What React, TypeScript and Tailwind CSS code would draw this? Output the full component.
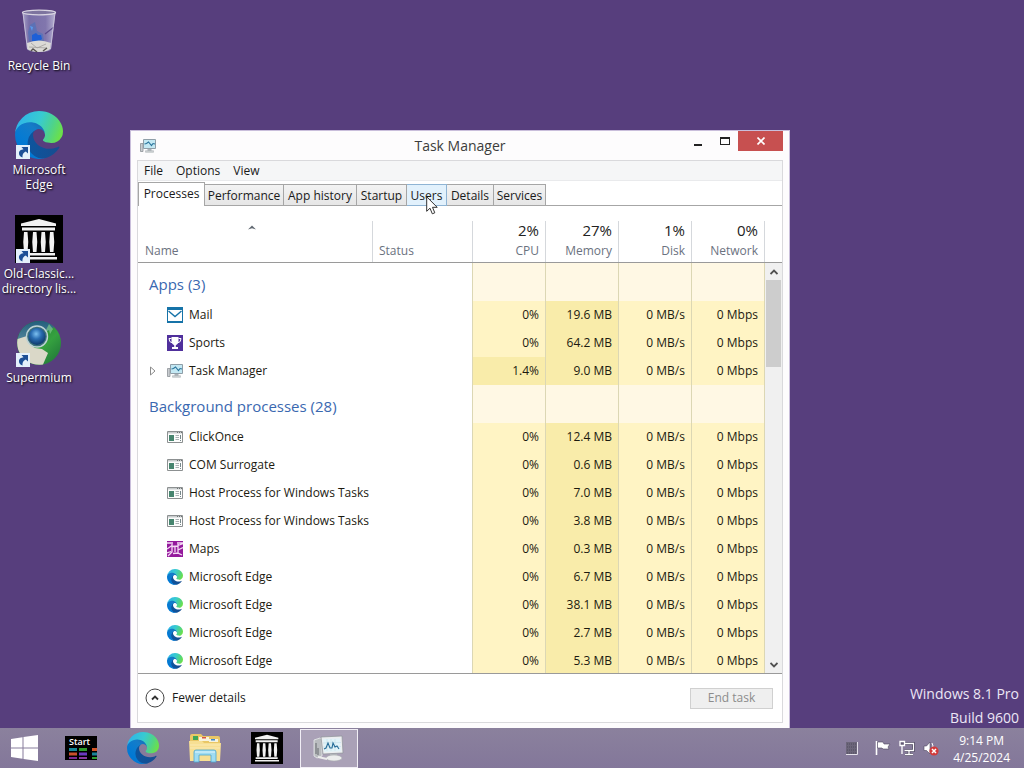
import { useId, useState } from "react";
import type { ReactNode } from "react";

type IconProps = { className?: string };

function EdgeIcon({ className }: IconProps) {
  const id = useId();
  return (
    <svg viewBox="0 0 256 256" className={className} aria-hidden="true">
      <defs>
        <linearGradient id={id + "a"} x1="63" y1="178" x2="241" y2="178" gradientUnits="userSpaceOnUse">
          <stop offset="0" stopColor="#0c559f" />
          <stop offset="1" stopColor="#164d90" />
        </linearGradient>
        <linearGradient id={id + "b"} x1="157" y1="90" x2="46" y2="211" gradientUnits="userSpaceOnUse">
          <stop offset="0" stopColor="#1670ba" />
          <stop offset="0.25" stopColor="#157cc8" />
          <stop offset="0.67" stopColor="#087bd1" />
          <stop offset="1" stopColor="#0078d4" />
        </linearGradient>
        <linearGradient id={id + "c"} x1="20" y1="60" x2="240" y2="150" gradientUnits="userSpaceOnUse">
          <stop offset="0" stopColor="#2fb6e8" />
          <stop offset="0.45" stopColor="#38cbd0" />
          <stop offset="0.75" stopColor="#4ed38b" />
          <stop offset="1" stopColor="#6be04a" />
        </linearGradient>
      </defs>
      <g transform="translate(-4.63 -4.92)">
        <path
          fill={`url(#${id}a)`}
          d="M235.68 195.46a93.73 93.73 0 0 1-10.54 4.71 101.87 101.87 0 0 1-35.9 6.46c-47.32 0-88.54-32.55-88.54-74.32A31.48 31.48 0 0 1 117.13 105c-42.8 1.8-53.8 46.4-53.8 72.53 0 73.88 68.09 81.37 82.76 81.37 7.91 0 19.84-2.3 27-4.56l1.31-.44A128.34 128.34 0 0 0 241 201.1a4 4 0 0 0-5.32-5.64Z"
        />
        <path
          fill={`url(#${id}b)`}
          d="M110.34 246.34A79.2 79.2 0 0 1 87.6 225a80.72 80.72 0 0 1 29.53-120c3.12-1.47 8.45-4.13 15.54-4a32.35 32.35 0 0 1 25.69 13 31.88 31.88 0 0 1 6.36 18.66c0-.21 24.46-79.6-80-79.6-43.9 0-80 41.66-80 78.21a130.15 130.15 0 0 0 12.11 56 128 128 0 0 0 156.38 67.11 75.55 75.55 0 0 1-62.78-8Z"
        />
        <path
          fill={`url(#${id}c)`}
          d="M156.94 153.78c-.81 1.05-3.3 2.5-3.3 5.66 0 2.61 1.7 5.12 4.72 7.23 14.38 10 41.49 8.68 41.56 8.68a59.56 59.56 0 0 0 30.27-8.35A61.38 61.38 0 0 0 260.62 114c.26-22.41-8-37.31-11.34-43.91C228.08 28.76 182.35 5 132.62 5a128 128 0 0 0-128 126.2c.48-36.54 36.8-66.05 80-66.05 3.5 0 23.46.34 42 10.07 16.34 8.58 24.9 18.94 30.85 29.21 6.18 10.67 7.28 24.15 7.28 29.52s-2.74 13.33-7.81 19.83Z"
        />
      </g>
    </svg>
  );
}

function RecycleBinIcon({ className }: IconProps) {
  const id = useId();
  return (
    <svg viewBox="0 0 36 44" className={className} aria-hidden="true">
      <defs>
        <linearGradient id={id + "g"} x1="0" x2="1" y1="0" y2="0">
          <stop offset="0" stopColor="#b9b5d6" stopOpacity="0.85" />
          <stop offset="0.2" stopColor="#817ab2" stopOpacity="0.8" />
          <stop offset="0.7" stopColor="#8f89bd" stopOpacity="0.75" />
          <stop offset="1" stopColor="#c4c0dc" stopOpacity="0.9" />
        </linearGradient>
      </defs>
      <path d="M1.500 3 6 40q1 3 12 3t12-3l4.500-37Z" fill={`url(#${id}g)`} />
      <path d="m9 16 5-3 2 9 6 3 1 7-8 2-7-2-1-9Z" fill="#4a72bd" opacity="0.6" />
      <path d="m11 26 4-2 2 2 3 0 1 4-5 4-5-2Z" fill="#1d5fd6" />
      <path d="m9 17 3 1-1 4Z" fill="#5b9aec" />
      <path d="M6 34q12-5 24 0l-1 6q-3 3-11 3T6 40Z" fill="#dcdad6" />
      <path d="m10 34 6 5 9-4M8 38l18 1" stroke="#a3a19e" fill="none" strokeWidth="0.800" />
      <path d="m10 42 2-2 4 3M22 42l4-3" stroke="#56524f" strokeWidth="1.400" fill="none" />
      <path d="M24 25l9-7" stroke="#5b4b8c" strokeWidth="1.200" />
      <path d="M2 4 6.500 40M34 4l-4.500 36" stroke="#c9c4db" strokeWidth="0.900" />
      <ellipse cx="18" cy="3.500" rx="16.500" ry="2.300" fill="#7d749f" stroke="#d9d5e2" strokeWidth="1.300" />
    </svg>
  );
}

function TempleIcon({ className }: IconProps) {
  return (
    <svg viewBox="0 0 48 48" className={className} aria-hidden="true">
      <path fill="#000" d="M0 0h48v48H0z" />
      <g fill="#f2f2f2">
        <path d="m24 4 17 4.500V11H6V8.500ZM7 12.500h33v3H7ZM7 38h33v2.600H7ZM6 42h36v2.400H6Z" />
        <path d="M9 17h3.500q1.500 10 0 20H9q-1.500-10 0-20ZM18 17h3.500q1.500 10 0 20H18q-1.500-10 0-20ZM26.500 17H30q1.500 10 0 20h-3.500q-1.500-10 0-20ZM35 17h3.500q1.500 10 0 20H35q-1.500-10 0-20Z" />
      </g>
    </svg>
  );
}

function SupermiumIcon({ className }: IconProps) {
  const id = useId();
  return (
    <svg viewBox="0 0 48 48" className={className} aria-hidden="true">
      <defs>
        <radialGradient id={id + "b"} cx="0.45" cy="0.35" r="0.6">
          <stop offset="0" stopColor="#7cc0f0" />
          <stop offset="0.5" stopColor="#2a6db2" />
          <stop offset="1" stopColor="#123f74" />
        </radialGradient>
        <linearGradient id={id + "g"} x1="0" x2="1" y1="0" y2="1">
          <stop offset="0" stopColor="#1c6b33" />
          <stop offset="0.6" stopColor="#35a13f" />
          <stop offset="1" stopColor="#1c6e38" />
        </linearGradient>
        <linearGradient id={id + "t"} x1="0" x2="0" y1="0" y2="1">
          <stop offset="0" stopColor="#235f7c" />
          <stop offset="1" stopColor="#4f8299" />
        </linearGradient>
      </defs>
      <circle cx="24" cy="24" r="22" fill={`url(#${id}g)`} />
      <path d="M2.500 20A22 22 0 0 1 39 8l-6 4-8-3-9 4-5 6Z" fill={`url(#${id}t)`} />
      <path d="M2.500 20l9.500-3q1 9 8 12l7 1 6 4-5 11.500A22 22 0 0 1 2.500 20Z" fill="#dad8c8" />
      <path d="M34 5l-4 8 4-2 1 4 3-5Z" fill="#7dc98a" opacity="0.7" />
      <circle cx="22" cy="17.500" r="10.500" fill="#3b6f7a" stroke="#bfd3d6" strokeWidth="1.400" />
      <circle cx="22" cy="17.500" r="8.500" fill={`url(#${id}b)`} />
    </svg>
  );
}

function ShortcutBadge() {
  return (
    <svg viewBox="0 0 14 14" className="absolute bottom-0 left-px size-3.5" aria-hidden="true">
      <path d="M0 0h14v14H0z" fill="#e4f0fb" />
      <path d="M5.500 2H12v6.500L9.800 6.500Q6 8 6.500 12.500 2.500 11 3 7.500 3.500 4.800 7.500 4.300Z" fill="#1d4f96" />
    </svg>
  );
}

function MonitorIcon({ className }: IconProps) {
  return (
    <svg viewBox="0 0 16 16" className={className} aria-hidden="true">
      <path d="M.5 5.500h2.500v8H.5z" fill="#c8ccd0" stroke="#8d9297" strokeWidth="0.8" />
      <path d="M3.500 1.500h12v9h-12z" fill="#c3e8f3" stroke="#8f9ea8" />
      <path d="m4.500 6 2-.5L8.500 4l3 3.500 1.500-2 2 .5" fill="none" stroke="#28749c" strokeWidth="1.100" />
      <path d="M7.500 11h4v2h-4z" fill="#aab2b8" />
      <path d="M5.500 12.700h8v1.600h-8z" fill="#d0d4d7" stroke="#a5aaae" strokeWidth="0.500" />
    </svg>
  );
}

function LargeMonitorIcon({ className }: IconProps) {
  return (
    <svg viewBox="0 0 32 28" className={className} aria-hidden="true">
      <path d="m1 6 6-2 2 1v17l-5 2-3-2Z" fill="#b9bcbf" stroke="#e9ebec" strokeWidth="0.8" />
      <path d="M3 9v11M5 14v7" stroke="#65696d" />
      <path d="m8 3 21-1 1 17-20 1Z" fill="#eceef0" stroke="#8c9297" strokeWidth="0.700" />
      <path d="m10 5 17-.8 1 13-17 .8Z" fill="#e2f3f8" />
      <path d="M14 5v12M18 5v12M22 5v12M10 9l18-.5M10 13l18-.5" stroke="#bcdbe7" strokeWidth="0.500" />
      <path d="m11 15 2-1 2-5 2 5 2 0 1-5 2 4 2-1 2 3" fill="none" stroke="#266c98" strokeWidth="1.100" />
      <path d="M17 20h7v3h-7z" fill="#b5b9bd" />
      <ellipse cx="21" cy="24" rx="8" ry="3" fill="#eceded" stroke="#a7abae" strokeWidth="0.600" />
      <path d="m5 23 9 2" stroke="#ececec" strokeWidth="2" />
    </svg>
  );
}

function MailIcon({ className }: IconProps) {
  return (
    <svg viewBox="0 0 16 16" className={className} aria-hidden="true">
      <path d="M0 0h16v16H0z" fill="#1673a8" />
      <path d="M1 3h14v11H1z" fill="#fff" />
      <path d="m1.500 4 6.500 5.500L14.500 4" fill="none" stroke="#1673a8" strokeWidth="1.400" />
    </svg>
  );
}

function SportsIcon({ className }: IconProps) {
  return (
    <svg viewBox="0 0 16 16" className={className} aria-hidden="true">
      <path d="M0 0h16v16H0z" fill="#50309c" />
      <path d="M4.500 2h7v5q-1 3-2.700 3.300V12H11v2H5v-2h2.200v-1.700Q5.500 10 4.500 7Z" fill="#fff" />
      <path d="M4.500 3.500H2q0 4 3.500 4.500M11.500 3.500H14q0 4-3.500 4.500" fill="none" stroke="#fff" />
    </svg>
  );
}

function ProgramIcon({ className }: IconProps) {
  return (
    <svg viewBox="0 0 16 16" className={className} aria-hidden="true">
      <path d="M.5 2.500h15v11H.5z" fill="#fdfdfd" stroke="#8c9091" />
      <path d="M1 3h14v1.500H1z" fill="#c9cdce" />
      <path d="M10 3.500h1M12 3.500h1M14 3.500h1" stroke="#6d7273" />
      <path d="M2 6h5v6H2z" fill="#47856f" />
      <path d="M8.500 6.500H12M8.500 8.500H12M8.500 10.500H12" stroke="#a9b2b4" />
      <path d="M13.500 6v4M13.500 11v1" stroke="#77888b" />
    </svg>
  );
}

function MapsIcon({ className }: IconProps) {
  return (
    <svg viewBox="0 0 16 16" className={className} aria-hidden="true">
      <path d="M0 0h16v16H0z" fill="#941a9c" />
      <path
        d="M0 2h6M10 2h6M0 8 5 4.500M5 3v8l-4 4M11 3v9l4 2M8 5v6M5 5.500l6-.5M11 4.500l5-2M0 12l4-1.500M6 12.500l5-.5M11 9l5-2.500"
        fill="none"
        stroke="#f4d9f5"
        strokeWidth="1.300"
      />
    </svg>
  );
}

function FolderIcon({ className }: IconProps) {
  return (
    <svg viewBox="0 0 32 30" className={className} aria-hidden="true">
      <path d="M1 3q0-2 2-2h9l2 2h15q2 0 2 2v22H1Z" fill="#e9c766" />
      <path d="M4 3h5v4H4z" fill="#3fa657" />
      <path d="M10 4h10v4H10z" fill="#f8f3dc" />
      <path d="M13 4h4v1.500h-4z" fill="#d95442" />
      <path d="M20 6h9v3h-9z" fill="#f8f3dc" />
      <path d="M22 6h4v1.500h-4z" fill="#3b86d0" />
      <path d="M0 8h13l2 2h17l-1 18H1Z" fill="#f7df93" />
      <path d="M1 12h30M1 15h30" stroke="#fbeab4" />
      <path d="M5 29V19q0-2 2-2h18q2 0 2 2v10h-5v-7H10v7Z" fill="#9fdcf2" stroke="#4ba6cf" strokeWidth="0.800" />
      <path d="M6 19h20" stroke="#e1f6fd" />
    </svg>
  );
}

function WindowsIcon({ className }: IconProps) {
  return (
    <svg viewBox="0 0 28 26" className={className} aria-hidden="true">
      <path
        d="M0 4l11.500-1.700v10.200H0ZM12.500 2.100 27 0v12.500H12.500ZM0 13.500h11.500v10.200L0 22ZM12.500 13.500H27V26l-14.500-2.100Z"
        fill="#fff"
      />
    </svg>
  );
}

function StartTile() {
  return (
    <span className="flex h-6 w-8 flex-col bg-black pl-1 text-left">
      <span className="text-[9px] leading-[11px] font-semibold text-white">Start</span>
      <svg viewBox="0 0 28 12" className="h-3 w-7" aria-hidden="true">
        <path d="M0 1h8v3H0z" fill="#16889a" />
        <path d="M10 1h8v3h-8z" fill="#2f9e2c" />
        <path d="M23 1h5v3h-5z" fill="#d35426" />
        <path d="M0 5.500h8v3H0z" fill="#c9512b" />
        <path d="M10 5.500h8v3h-8z" fill="#6a3ac0" />
        <path d="M23 5.500h5v3h-5z" fill="#1b8296" />
        <path d="M0 10h8v2H0z" fill="#7b2a92" />
        <path d="M10 10h8v2h-8z" fill="#8a3aa0" />
        <path d="M23 10h5v2h-5z" fill="#2f9e2c" />
      </svg>
    </span>
  );
}

type Row = {
  name: string;
  icon: (p: IconProps) => ReactNode;
  cpu: string;
  memory: string;
  expandable?: boolean;
};

const apps: Row[] = [
  { name: "Mail", icon: MailIcon, cpu: "0%", memory: "19.6 MB" },
  { name: "Sports", icon: SportsIcon, cpu: "0%", memory: "64.2 MB" },
  { name: "Task Manager", icon: MonitorIcon, cpu: "1.4%", memory: "9.0 MB", expandable: true },
];

const background: Row[] = [
  { name: "ClickOnce", icon: ProgramIcon, cpu: "0%", memory: "12.4 MB" },
  { name: "COM Surrogate", icon: ProgramIcon, cpu: "0%", memory: "0.6 MB" },
  { name: "Host Process for Windows Tasks", icon: ProgramIcon, cpu: "0%", memory: "7.0 MB" },
  { name: "Host Process for Windows Tasks", icon: ProgramIcon, cpu: "0%", memory: "3.8 MB" },
  { name: "Maps", icon: MapsIcon, cpu: "0%", memory: "0.3 MB" },
  { name: "Microsoft Edge", icon: EdgeIcon, cpu: "0%", memory: "6.7 MB" },
  { name: "Microsoft Edge", icon: EdgeIcon, cpu: "0%", memory: "38.1 MB" },
  { name: "Microsoft Edge", icon: EdgeIcon, cpu: "0%", memory: "2.7 MB" },
  { name: "Microsoft Edge", icon: EdgeIcon, cpu: "0%", memory: "5.3 MB" },
];

const plainTab = "border-[#a6a6a6] bg-linear-to-b from-[#f3f3f3] to-[#e6e6e6]";

const tabs = [
  { label: "Performance", style: `w-[79px] ${plainTab}` },
  { label: "App history", style: `w-[73px] ${plainTab}` },
  { label: "Startup", style: `w-[50px] ${plainTab}` },
  { label: "Users", style: "w-10 border-[#8fb4d4] bg-[#e2f1fc]" },
  { label: "Details", style: `w-[47px] ${plainTab}` },
  { label: "Services", style: `w-[52px] ${plainTab}` },
];

const usage = [
  { label: "CPU", value: "2%" },
  { label: "Memory", value: "27%" },
  { label: "Disk", value: "1%" },
  { label: "Network", value: "0%" },
];

const cell = "border-r border-[#dcd7b4] pr-1.5 text-right";

function GroupRow({ title }: { title: string }) {
  return (
    <tr className="h-[38px]">
      <th colSpan={2} scope="rowgroup" className="border-r border-[#dcd7b4] pt-1 pl-[11px] text-left text-[15px] font-normal text-[#3a68b0]">
        {title}
      </th>
      {usage.map((u) => (
        <td key={u.label} className="border-r border-[#dcd7b4] bg-[#fff8e4]" />
      ))}
    </tr>
  );
}

function ProcessRow({ row }: { row: Row }) {
  const Icon = row.icon;
  const busy = row.cpu !== "0%";
  return (
    <tr className="h-7">
      <td colSpan={2} className="border-r border-[#dcd7b4]">
        <div className="flex items-center pl-[11px]">
          <span className="flex w-[18px]">
            {row.expandable && (
              <button type="button" aria-label="Expand Task Manager">
                <svg viewBox="0 0 8 10" className="h-2.5 w-2" aria-hidden="true">
                  <path d="M1.500 1 6 5l-4.500 4Z" fill="#fff" stroke="#8b8b8b" />
                </svg>
              </button>
            )}
          </span>
          <Icon className="mr-1.5 size-4" />
          {row.name}
        </div>
      </td>
      <td className={busy ? `${cell} bg-[#f9ecaa]` : `${cell} bg-[#fff4c4]`}>{row.cpu}</td>
      <td className={`${cell} bg-[#f9ecaa]`}>{row.memory}</td>
      <td className={`${cell} bg-[#fff4c4]`}>0 MB/s</td>
      <td className={`${cell} bg-[#fff4c4]`}>0 Mbps</td>
    </tr>
  );
}

function TaskManager() {
  const [active, setActive] = useState("Processes");
  return (
    <section
      aria-label="Task Manager"
      className="absolute bottom-0 left-[130px] flex h-[598px] w-[660px] flex-col border border-b-0 border-[#c9bedb] bg-[#fdfcfd] px-1.5 pb-[5px]"
    >
      <header className="flex h-[29px] shrink-0 items-start">
        <div className="flex w-[135px] pt-[7px] pl-[3px]">
          <MonitorIcon className="size-4" />
        </div>
        <h1 className="flex-1 text-center text-sm leading-[29px] text-[#3c3c3c]">Task Manager</h1>
        <div className="flex w-[135px] justify-end">
          <button type="button" aria-label="Minimize" className="flex h-5 w-[27px] items-end justify-center pb-[5px]">
            <span className="h-0.5 w-2 bg-[#222]" />
          </button>
          <button type="button" aria-label="Maximize" className="flex h-5 w-[27px] items-center justify-center">
            <span className="h-2 w-2.5 border border-t-2 border-[#222]" />
          </button>
          <button type="button" aria-label="Close" className="flex h-5 w-[45px] items-center justify-center bg-[#c75050]">
            <svg viewBox="0 0 8 8" className="size-2" aria-hidden="true">
              <path d="m.5.5 7 7m0-7-7 7" stroke="#fff" strokeWidth="1.600" />
            </svg>
          </button>
        </div>
      </header>

      <div className="flex min-h-0 flex-1 flex-col border border-[#d9d9dc] bg-white">
        <nav aria-label="Menu" className="flex h-5 shrink-0 items-center gap-[13px] border-b border-[#e9eaec] bg-[#f5f6f7] pl-1.5 text-[12px] text-[#1a1a1a]">
          <button type="button">File</button>
          <button type="button">Options</button>
          <button type="button">View</button>
        </nav>

        <div role="tablist" className="flex h-[25px] shrink-0 items-end text-[12px] leading-4 text-[#1a1a1a]">
          <button
            type="button"
            role="tab"
            aria-selected={active === "Processes"}
            onClick={() => setActive("Processes")}
            className="h-6 w-[67px] border border-b-0 border-[#a6a6a6] bg-white pb-0.5"
          >
            Processes
          </button>
          {tabs.map((t) => (
            <button
              key={t.label}
              type="button"
              role="tab"
              aria-selected={active === t.label}
              onClick={() => setActive(t.label)}
              className={`h-[22px] shrink-0 border border-l-0 pt-0.5 ${t.style}`}
            >
              {t.label}
            </button>
          ))}
          <span className="h-px flex-1 bg-[#a6a6a6]" />
        </div>

        <div className="flex min-h-0 flex-1 overflow-hidden">
          <table className="h-px flex-1 table-fixed border-separate border-spacing-0 text-[12px] text-[#1c1a10]">
            <colgroup>
              <col />
              <col className="w-[100px]" />
              <col className="w-[73px]" />
              <col className="w-[73px]" />
              <col className="w-[73px]" />
              <col className="w-[73px]" />
            </colgroup>
            <thead className="text-[#6b7280]">
              <tr className="h-[57px]">
                <th scope="col" className="border-b border-[#9a9a9a] p-0 pt-[15px] font-normal">
                  <div className="flex h-[41px] flex-col border-r border-[#d5d8dc] pl-[7px] text-left">
                    <svg viewBox="0 0 8 5" className="mt-1 mr-3.5 h-[5px] w-2 self-center" aria-hidden="true">
                      <path d="M0 4.500 4 .5l4 4-4-1.300Z" fill="#5f6770" />
                    </svg>
                    <span className="mt-auto pb-[3px] leading-4">Name</span>
                  </div>
                </th>
                <th scope="col" className="border-b border-[#9a9a9a] p-0 pt-[15px] font-normal">
                  <div className="flex h-[41px] flex-col border-r border-[#d5d8dc] pl-1.5 text-left">
                    <span className="mt-auto pb-[3px] leading-4">Status</span>
                  </div>
                </th>
                {usage.map((u) => (
                  <th key={u.label} scope="col" className="border-b border-[#9a9a9a] p-0 pt-[15px] font-normal">
                    <div className="flex h-[41px] flex-col justify-end border-r border-[#d5d8dc] pr-1.5 pb-[3px] text-right">
                      <span className="mb-[3px] text-[15px] leading-5 text-[#222]">{u.value}</span>
                      <span className="leading-4">{u.label}</span>
                    </div>
                  </th>
                ))}
              </tr>
            </thead>
            <tbody>
              <GroupRow title="Apps (3)" />
              {apps.map((r) => (
                <ProcessRow key={r.name} row={r} />
              ))}
            </tbody>
            <tbody>
              <GroupRow title="Background processes (28)" />
              {background.map((r, i) => (
                <ProcessRow key={i} row={r} />
              ))}
            </tbody>
          </table>
          <div className="flex w-[17px] flex-col">
            <div className="h-[57px] shrink-0 border-b border-[#9a9a9a]" />
            <div className="flex flex-1 flex-col bg-[#f0f0f0] pr-px pl-px">
              <button type="button" aria-label="Scroll up" className="flex h-[17px] items-center justify-center">
                <svg viewBox="0 0 8 6" className="h-1.5 w-2" aria-hidden="true">
                  <path d="m.5 5 3.500-3.500L7.500 5" fill="none" stroke="#505050" strokeWidth="1.800" />
                </svg>
              </button>
              <div className="h-[87px] bg-[#cdcdcd]" />
              <button type="button" aria-label="Scroll down" className="mt-auto flex h-[17px] items-center justify-center">
                <svg viewBox="0 0 8 6" className="h-1.5 w-2" aria-hidden="true">
                  <path d="m.5 1 3.500 3.500L7.500 1" fill="none" stroke="#505050" strokeWidth="1.800" />
                </svg>
              </button>
            </div>
          </div>
        </div>

        <footer className="flex h-[49px] shrink-0 items-center justify-between border-t border-[#9a9a9a] pr-[9px] pl-[7px] text-[12px]">
          <button type="button" className="flex items-center gap-[7px] text-[#1a1a1a]">
            <svg viewBox="0 0 20 20" className="size-5" aria-hidden="true">
              <circle cx="10" cy="10" r="9" fill="#fff" stroke="#444" />
              <path d="m7 11.500 3-3 3 3" fill="none" stroke="#333" strokeWidth="1.800" />
            </svg>
            Fewer details
          </button>
          <button type="button" disabled className="h-[21px] w-[83px] border border-[#d0d0d0] bg-[#efefef] leading-4 text-[#8c8c8c]">
            End task
          </button>
        </footer>
      </div>

      <svg viewBox="0 0 13 20" className="pointer-events-none absolute top-[65px] left-[295px] h-5 w-[13px]" aria-hidden="true">
        <path d="M.7.800v14.500l3.300-3.100 2.300 5.600 2.500-1-2.300-5.500h4.700Z" fill="#fff" stroke="#333" />
      </svg>
    </section>
  );
}

function DesktopItem({ label, shortcut, children }: { label: ReactNode; shortcut?: boolean; children: ReactNode }) {
  return (
    <button
      type="button"
      className="flex h-[104px] w-full flex-col items-center gap-[3px] text-[12px] leading-[15px] text-white [text-shadow:1px_1px_2px_#000]"
    >
      <span className="relative flex size-12 items-center justify-center">
        {children}
        {shortcut && <ShortcutBadge />}
      </span>
      <span className="whitespace-nowrap">{label}</span>
    </button>
  );
}

function Taskbar() {
  return (
    <footer className="flex h-10 shrink-0 items-center justify-between bg-linear-to-b from-[#8b819d] to-[#83779a] text-white">
      <nav aria-label="Taskbar" className="flex h-full items-center">
        <button type="button" aria-label="Start" className="flex w-[50px] justify-center">
          <WindowsIcon className="h-[26px] w-7" />
        </button>
        <button type="button" aria-label="Start screen" className="flex w-[62px] justify-center">
          <StartTile />
        </button>
        <button type="button" aria-label="Microsoft Edge" className="flex w-[62px] justify-center">
          <EdgeIcon className="size-8" />
        </button>
        <button type="button" aria-label="File Explorer" className="flex w-[62px] justify-center">
          <FolderIcon className="h-[30px] w-8" />
        </button>
        <button type="button" aria-label="Old-Classic directory listing" className="flex w-[62px] justify-center">
          <TempleIcon className="size-8" />
        </button>
        <button
          type="button"
          aria-label="Task Manager"
          className="ml-0.5 flex h-[39px] w-[58px] items-center justify-center border border-[#f1eef5] bg-[#aaa1b7]"
        >
          <LargeMonitorIcon className="h-7 w-8" />
        </button>
      </nav>
      <div className="flex items-center pr-3.5">
        <svg viewBox="0 0 12 13" className="mr-[17px] h-[13px] w-3" aria-hidden="true">
          <path d="M0 0h11v12H0z" fill="#6c667a" />
          <path d="M11.500 0v12.500H0" fill="none" stroke="#e4e1ea" />
          <path d="M1 2h9M1 5h9M1 8h9M1 11h9" stroke="#514d5e" strokeDasharray="1 1" />
        </svg>
        <svg viewBox="0 0 16 16" className="mr-2 size-4" aria-hidden="true">
          <path d="M1.500 1v14" stroke="#fff" strokeWidth="1.600" />
          <path d="M2.500 2H8l1 2h6l-2 3 1 2H8L7 8H2.500Z" fill="#fff" stroke="#4e475e" strokeWidth="0.600" />
        </svg>
        <svg viewBox="0 0 16 16" className="mr-2 size-4" aria-hidden="true">
          <path d="M6 3.500h8.500v7H5.500M10 11v3M6 14.500h8" fill="none" stroke="#3e3850" strokeWidth="2.600" />
          <path d="M6 3.500h8.500v7H5.500M10 11v3M6 14.500h8" fill="none" stroke="#fff" strokeWidth="1.300" />
          <path d="M1 1.500h4.500v4H1ZM3 5v9" fill="#625a75" stroke="#fff" strokeWidth="1.300" />
        </svg>
        <svg viewBox="0 0 16 16" className="mr-3.5 size-4" aria-hidden="true">
          <path d="M1 6h2.500L7 2v12L3.500 10.500H1Z" fill="#fff" stroke="#4e475e" strokeWidth="0.600" />
          <path d="M9 3q2 3 0 6" fill="none" stroke="#fff" />
          <circle cx="11" cy="11" r="4.600" fill="#d23b3b" />
          <path d="m9 9 4 4m0-4-4 4" stroke="#fff" strokeWidth="1.500" />
        </svg>
        <div className="pt-0.5 text-center text-[12px] leading-[17px]">
          <div>9:14 PM</div>
          <div>4/25/2024</div>
        </div>
      </div>
    </footer>
  );
}

export default function App() {
  return (
    <div className="flex h-screen min-h-[640px] cursor-default flex-col bg-[#573e7d] font-['Open_Sans','Noto_Sans',sans-serif]">
      <main className="relative flex min-h-0 flex-1 justify-between overflow-hidden">
        <div className="flex w-[78px] flex-col pt-[7px]">
          <DesktopItem label="Recycle Bin">
            <RecycleBinIcon className="h-11 w-9" />
          </DesktopItem>
          <DesktopItem label={<>Microsoft<br />Edge</>} shortcut>
            <EdgeIcon className="size-12" />
          </DesktopItem>
          <DesktopItem label={<>Old-Classic...<br />directory lis...</>} shortcut>
            <TempleIcon className="size-12" />
          </DesktopItem>
          <DesktopItem label="Supermium" shortcut>
            <SupermiumIcon className="size-12" />
          </DesktopItem>
        </div>
        <p className="-mb-0.5 self-end pr-[5px] text-right text-sm leading-6 text-[#ece6f5]">
          Windows 8.1 Pro
          <br />
          Build 9600
        </p>
        <TaskManager />
      </main>
      <Taskbar />
    </div>
  );
}
